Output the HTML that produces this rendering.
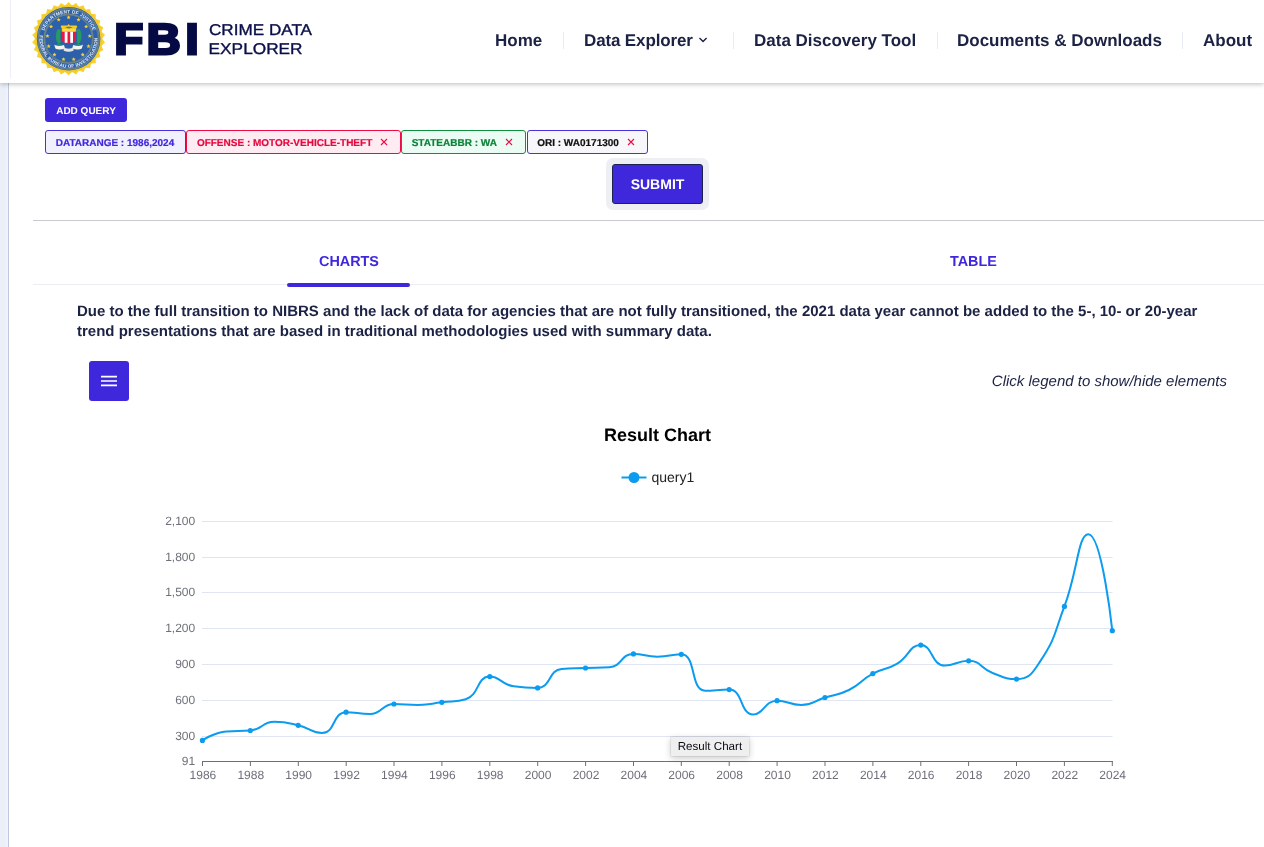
<!DOCTYPE html>
<html lang="en"><head><meta charset="utf-8"><title>FBI Crime Data Explorer</title>
<style>
*{box-sizing:border-box;margin:0;padding:0}
html,body{width:1264px;height:847px;overflow:hidden;background:#fff}
body{text-rendering:geometricPrecision;font-family:"Liberation Sans",Arial,Helvetica,sans-serif;color:#1c2244;position:relative}
.abs{position:absolute}
#strip{left:0;top:83px;width:8px;height:764px;background:linear-gradient(90deg,#ebeff8 0,#ebeff8 6.4px,#f1f4fa 6.6px)}
#stripline{left:8px;top:83px;width:1px;height:764px;background:#bfc7df}
#header{left:0;top:0;width:1264px;height:83px;background:#fff;box-shadow:0 1px 5px rgba(0,0,0,.28);z-index:5}
#hsep{left:10px;top:0;width:1px;height:78px;background:#eceef8}
.nav{position:absolute;top:30.6px;font-size:17px;font-weight:bold;color:#1c2244;line-height:20px;white-space:nowrap}
.nsep{position:absolute;top:32px;width:1px;height:17px;background:#e9ebf4}
.btn{position:absolute;background:#3f28dc;color:#fff;font-weight:bold;border-radius:3px;text-align:center;white-space:nowrap}
.chip{-webkit-text-stroke:.2px;position:absolute;top:130px;height:24px;border:1px solid;border-radius:3px;font-size:10px;font-weight:bold;line-height:22px;padding-left:9.7px;padding-top:1.7px;white-space:nowrap}
.chip .x{position:absolute;top:6.9px;stroke:#ee0a43;stroke-width:1.1;fill:none}
.tab{position:absolute;top:254.2px;font-size:14.4px;font-weight:bold;color:#3f28dc;line-height:16px}
svg text{text-rendering:geometricPrecision;font-family:"Liberation Sans",Arial,Helvetica,sans-serif}
#page{position:absolute;left:0;top:0;width:1264px;height:847px;overflow:hidden;will-change:transform}
</style></head><body><div id="page">
<div id="strip" class="abs"></div><div id="stripline" class="abs"></div>
<div id="header" class="abs">
 <div id="hsep" class="abs"></div>
 <svg class="abs" style="left:0;top:0" width="330" height="83" viewBox="0 0 330 83">
  <g>
<polygon points="68.60,2.10 72.10,5.38 76.21,2.90 78.95,6.84 83.49,5.26 85.35,9.69 90.11,9.09 91.02,13.80 95.80,14.21 95.70,19.01 100.30,20.40 99.20,25.07 103.41,27.39 101.37,31.73 105.00,34.87 102.10,38.70 105.00,42.53 101.37,45.67 103.41,50.01 99.20,52.33 100.30,57.00 95.70,58.39 95.80,63.19 91.02,63.60 90.11,68.31 85.35,67.71 83.49,72.14 78.95,70.56 76.21,74.50 72.10,72.02 68.60,75.30 65.10,72.02 60.99,74.50 58.25,70.56 53.71,72.14 51.85,67.71 47.09,68.31 46.18,63.60 41.40,63.19 41.50,58.39 36.90,57.00 38.00,52.33 33.79,50.01 35.83,45.67 32.20,42.53 35.10,38.70 32.20,34.87 35.83,31.73 33.79,27.39 38.00,25.07 36.90,20.40 41.50,19.01 41.40,14.21 46.18,13.80 47.09,9.09 51.85,9.69 53.71,5.26 58.25,6.84 60.99,2.90 65.10,5.38" fill="#f7d12f"/>
<circle cx="68.6" cy="38.7" r="33.7" fill="#f4cb2b"/>
<circle cx="68.6" cy="38.7" r="31.8" fill="#2d60aa"/>
<g fill="none" stroke="#d9c648">
<circle cx="68.6" cy="38.7" r="30.7" stroke-width=".4"/><circle cx="68.6" cy="38.7" r="29.6" stroke-width=".3"/>
<circle cx="68.6" cy="38.7" r="24.6" stroke-width=".4"/><circle cx="68.6" cy="38.7" r="23.7" stroke-width=".3"/>
</g>
<defs>
<path id="sealTop" d="M43.10 38.70 A25.5 25.5 0 0 1 94.10 38.70"/>
<path id="sealBot" d="M39.79 35.42 A29.0 29.0 0 1 0 97.41 35.42"/>
</defs>
<text font-size="4.7" font-weight="bold" fill="#e6ecf7" letter-spacing=".12"><textPath href="#sealTop" startOffset="50%" text-anchor="middle">DEPARTMENT OF JUSTICE</textPath></text>
<text font-size="4.7" font-weight="bold" fill="#e6ecf7" textLength="95" lengthAdjust="spacing"><textPath href="#sealBot" textLength="95" lengthAdjust="spacing">FEDERAL BUREAU OF INVESTIGATION</textPath></text>
<g fill="#f4d232"><polygon points="68.60,15.25 69.18,16.60 70.64,16.74 69.54,17.71 69.86,19.14 68.60,18.39 67.34,19.14 67.66,17.71 66.56,16.74 68.02,16.60"/><polygon points="78.50,17.69 79.08,19.04 80.54,19.18 79.44,20.15 79.76,21.58 78.50,20.83 77.23,21.58 77.56,20.15 76.45,19.18 77.92,19.04"/><polygon points="86.13,24.45 86.71,25.80 88.17,25.94 87.07,26.91 87.39,28.34 86.13,27.59 84.87,28.34 85.19,26.91 84.08,25.94 85.55,25.80"/><polygon points="89.74,33.98 90.33,35.33 91.79,35.47 90.69,36.44 91.01,37.87 89.74,37.12 88.48,37.87 88.80,36.44 87.70,35.47 89.16,35.33"/><polygon points="88.52,44.10 89.10,45.45 90.56,45.59 89.46,46.56 89.78,47.99 88.52,47.24 87.25,47.99 87.58,46.56 86.47,45.59 87.93,45.45"/><polygon points="82.72,52.49 83.31,53.84 84.77,53.98 83.67,54.95 83.99,56.38 82.72,55.63 81.46,56.38 81.78,54.95 80.68,53.98 82.14,53.84"/><polygon points="73.70,57.23 74.28,58.58 75.74,58.72 74.64,59.69 74.96,61.12 73.70,60.37 72.43,61.12 72.76,59.69 71.65,58.72 73.12,58.58"/><polygon points="63.50,57.23 64.08,58.58 65.55,58.72 64.44,59.69 64.77,61.12 63.50,60.37 62.24,61.12 62.56,59.69 61.46,58.72 62.92,58.58"/><polygon points="54.48,52.49 55.06,53.84 56.52,53.98 55.42,54.95 55.74,56.38 54.48,55.63 53.21,56.38 53.53,54.95 52.43,53.98 53.89,53.84"/><polygon points="48.68,44.10 49.27,45.45 50.73,45.59 49.62,46.56 49.95,47.99 48.68,47.24 47.42,47.99 47.74,46.56 46.64,45.59 48.10,45.45"/><polygon points="47.46,33.98 48.04,35.33 49.50,35.47 48.40,36.44 48.72,37.87 47.46,37.12 46.19,37.87 46.51,36.44 45.41,35.47 46.87,35.33"/><polygon points="51.07,24.45 51.65,25.80 53.12,25.94 52.01,26.91 52.33,28.34 51.07,27.59 49.81,28.34 50.13,26.91 49.03,25.94 50.49,25.80"/><polygon points="58.70,17.69 59.28,19.04 60.75,19.18 59.64,20.15 59.97,21.58 58.70,20.83 57.44,21.58 57.76,20.15 56.66,19.18 58.12,19.04"/></g>
<path d="M57.6 29.2 C55.4 33 55.4 39.5 57.4 42.6 C59 44.6 62 44.8 64 45.4 L63.6 46.2 C61 45.8 58.6 45.6 57 44.4 L60.6 42.8 C60 38.6 60.4 33 60.6 29.6 Z" fill="#259a62"/>
<path d="M79.8 29.2 C82 33 82 39.5 80 42.6 C78.4 44.6 75.4 44.8 73.4 45.4 L73.8 46.2 C76.4 45.8 78.8 45.6 80.4 44.4 L76.8 42.8 C77.4 38.6 77 33 76.8 29.6 Z" fill="#259a62"/>
<path d="M60.6 26.9 L61.4 25.5 L67.4 25.4 L68.6 23.9 L69.8 25.4 L76.6 25.5 L77.4 26.9 L76.2 28 L76.2 32 L61.8 32 L61.8 28 Z" fill="#f5cc24"/>
<path d="M64.8 27.6 L68.8 26.5 L72.8 27.6 L68.8 28.4 Z" fill="#5a74a4"/>
<path d="M61.9 31.6 H76 V40.5 C76 42.4 71.2 42.6 68.95 43.8 C66.6 42.6 61.9 42.4 61.9 40.5 Z" fill="#e31b44"/>
<rect x="64.7" y="31.6" width="2.8" height="11.2" fill="#fff"/><rect x="70.2" y="31.6" width="2.8" height="11.2" fill="#fff"/>
<rect x="62.6" y="29.2" width="12.6" height="2.4" fill="#f8dc55"/>
<path d="M54.2 44.6 C57 46.6 61 46.2 64 45 L65 48.6 C61 50.2 57.4 49.6 55.4 48.4 Z" fill="#f4f4f0"/>
<path d="M83 44.6 C80.2 46.6 76.2 46.2 73.2 45 L72.2 48.6 C76.2 50.2 79.8 49.6 81.8 48.4 Z" fill="#f4f4f0"/>
<path d="M63.4 47.6 C66.6 49 70.6 49 73.8 47.6 L73.4 50.8 C70.4 52 66.8 52 63.8 50.8 Z" fill="#e6e6e0"/>
</g>
  <g transform="scale(1.08,1)"><text x="105.98 135.8 171.77" y="54.15" font-size="43.4" font-weight="bold" fill="#050a45" stroke="#050a45" stroke-width="2.9" stroke-linejoin="miter">FBI</text></g>
  <text x="209" y="34.7" font-size="15.6" fill="#0a0f48" stroke="#0a0f48" stroke-width=".35" textLength="103" lengthAdjust="spacingAndGlyphs">CRIME DATA</text>
  <text x="208.6" y="53.5" font-size="15.6" fill="#0a0f48" stroke="#0a0f48" stroke-width=".35" textLength="94" lengthAdjust="spacingAndGlyphs">EXPLORER</text>
 </svg>
 <div class="nav" style="left:495px">Home</div>
 <div class="nsep" style="left:563px"></div>
 <div class="nav" style="left:584px;letter-spacing:-.14px">Data Explorer</div>
 <svg class="abs" style="left:698px;top:35px" width="10" height="9" viewBox="0 0 10 9"><path d="M1.5 2.9 L5.05 6.4 L8.6 2.9" fill="none" stroke="#1c2244" stroke-width="1.4"/></svg>
 <div class="nsep" style="left:733px"></div>
 <div class="nav" style="left:754px">Data Discovery Tool</div>
 <div class="nsep" style="left:937px"></div>
 <div class="nav" style="left:957px">Documents &amp; Downloads</div>
 <div class="nsep" style="left:1182px"></div>
 <div class="nav" style="left:1203px">About</div>
</div>

<div class="btn" style="left:45px;top:98px;width:82px;height:24px;font-size:10px;line-height:24px;padding-top:2px">ADD QUERY</div>

<div class="chip" style="left:45px;width:140.6px;border-color:#4632e0;background:#f1f0ff;color:#3f28dc">DATARANGE : 1986,2024</div>
<div class="chip" style="left:186.2px;width:214.6px;border-color:#ee0a43;background:#ffecf2;color:#e40a41">OFFENSE : MOTOR-VEHICLE-THEFT<svg class="x" style="left:192.8px" width="8" height="8" viewBox="0 0 8 8"><path d="M1 1 7 7M7 1 1 7"/></svg></div>
<div class="chip" style="left:401px;width:124.9px;border-color:#0f9140;background:#eafcf4;color:#0b8238">STATEABBR : WA<svg class="x" style="left:103.4px" width="8" height="8" viewBox="0 0 8 8"><path d="M1 1 7 7M7 1 1 7"/></svg></div>
<div class="chip" style="left:526.5px;width:121.2px;border-color:#4632e0;background:#f7f7fb;color:#111">ORI : WA0171300<svg class="x" style="left:99.3px" width="8" height="8" viewBox="0 0 8 8"><path d="M1 1 7 7M7 1 1 7"/></svg></div>

<div class="abs" style="left:606px;top:158px;width:103px;height:52px;border-radius:7px;background:#eeeff3"></div>
<div class="btn" style="left:612px;top:164px;width:91px;height:40px;font-size:14px;line-height:38px;padding-top:.4px;border:1px solid #1b2350;border-radius:3px">SUBMIT</div>

<div class="abs" style="left:33px;top:220px;width:1231px;height:1px;background:#c9c9d4"></div>

<div class="tab" style="left:319px">CHARTS</div>
<div class="tab" style="left:950px">TABLE</div>
<div class="abs" style="left:33px;top:284px;width:1231px;height:1px;background:#ecedf3"></div>
<div class="abs" style="left:287px;top:283px;width:123px;height:4px;background:#3f28dc;border-radius:2px"></div>

<div class="abs" style="left:77px;top:302px;width:1180px;font-size:15px;font-weight:bold;line-height:19.8px;color:#1c2244;letter-spacing:.006px">Due to the full transition to NIBRS and the lack of data for agencies that are not fully transitioned, the 2021 data year cannot be added to the 5-, 10- or 20-year<br>trend presentations that are based in traditional methodologies used with summary data.</div>

<div class="btn" style="left:89px;top:361px;width:40px;height:40px">
 <svg class="abs" style="left:12px;top:14px" width="16" height="12" viewBox="0 0 16 12"><path d="M0 1.6h16M0 6h16M0 10.4h16" stroke="#fff" stroke-width="1.6" fill="none"/></svg>
</div>
<div class="abs" style="left:900px;top:373px;width:327px;text-align:right;font-size:15px;font-style:italic;color:#1c2244;line-height:18px;white-space:nowrap">Click legend to show/hide elements</div>

<svg class="abs" style="left:0;top:410px" width="1264" height="437" viewBox="0 410 1264 437">
 <text x="657.5" y="441" font-size="18" font-weight="bold" fill="#000" text-anchor="middle">Result Chart</text>
 <g stroke="#0b9cef" fill="#0b9cef"><line x1="621.5" x2="646.5" y1="477.5" y2="477.5" stroke-width="2"/><circle cx="634" cy="477.5" r="5.5" stroke="none"/></g>
 <text x="651.5" y="482.3" font-size="14" fill="#222">query1</text>
 <g stroke="#e0e6f1" stroke-width="1" shape-rendering="auto"><line x1="202" x2="1112.6" y1="521.5" y2="521.5"/><line x1="202" x2="1112.6" y1="557.5" y2="557.5"/><line x1="202" x2="1112.6" y1="592.5" y2="592.5"/><line x1="202" x2="1112.6" y1="628.5" y2="628.5"/><line x1="202" x2="1112.6" y1="664.5" y2="664.5"/><line x1="202" x2="1112.6" y1="700.5" y2="700.5"/><line x1="202" x2="1112.6" y1="736.5" y2="736.5"/></g>
 <g stroke="#6e7079" stroke-width="1"><line x1="202" x2="1113" y1="761.5" y2="761.5"/><line x1="202.5" x2="202.5" y1="761.5" y2="766"/><line x1="250.4" x2="250.4" y1="761.5" y2="766"/><line x1="298.3" x2="298.3" y1="761.5" y2="766"/><line x1="346.2" x2="346.2" y1="761.5" y2="766"/><line x1="394.0" x2="394.0" y1="761.5" y2="766"/><line x1="441.9" x2="441.9" y1="761.5" y2="766"/><line x1="489.8" x2="489.8" y1="761.5" y2="766"/><line x1="537.7" x2="537.7" y1="761.5" y2="766"/><line x1="585.6" x2="585.6" y1="761.5" y2="766"/><line x1="633.5" x2="633.5" y1="761.5" y2="766"/><line x1="681.3" x2="681.3" y1="761.5" y2="766"/><line x1="729.2" x2="729.2" y1="761.5" y2="766"/><line x1="777.1" x2="777.1" y1="761.5" y2="766"/><line x1="825.0" x2="825.0" y1="761.5" y2="766"/><line x1="872.9" x2="872.9" y1="761.5" y2="766"/><line x1="920.8" x2="920.8" y1="761.5" y2="766"/><line x1="968.6" x2="968.6" y1="761.5" y2="766"/><line x1="1016.5" x2="1016.5" y1="761.5" y2="766"/><line x1="1064.4" x2="1064.4" y1="761.5" y2="766"/><line x1="1112.3" x2="1112.3" y1="761.5" y2="766"/></g>
 <g font-size="12" fill="#6e7079" text-anchor="end"><text x="195.2" y="525.1">2,100</text><text x="195.2" y="561.1">1,800</text><text x="195.2" y="596.1">1,500</text><text x="195.2" y="632.1">1,200</text><text x="195.2" y="668.1">900</text><text x="195.2" y="704.1">600</text><text x="195.2" y="740.1">300</text><text x="195.2" y="764.8">91</text></g>
 <g font-size="12" fill="#6e7079" text-anchor="middle"><text x="202.9" y="778.8">1986</text><text x="250.8" y="778.8">1988</text><text x="298.7" y="778.8">1990</text><text x="346.6" y="778.8">1992</text><text x="394.4" y="778.8">1994</text><text x="442.3" y="778.8">1996</text><text x="490.2" y="778.8">1998</text><text x="538.1" y="778.8">2000</text><text x="586.0" y="778.8">2002</text><text x="633.9" y="778.8">2004</text><text x="681.7" y="778.8">2006</text><text x="729.6" y="778.8">2008</text><text x="777.5" y="778.8">2010</text><text x="825.4" y="778.8">2012</text><text x="873.3" y="778.8">2014</text><text x="921.2" y="778.8">2016</text><text x="969.0" y="778.8">2018</text><text x="1016.9" y="778.8">2020</text><text x="1064.8" y="778.8">2022</text><text x="1112.7" y="778.8">2024</text></g>
 <path d="M202.40 740.40C202.40 740.40 213.98 732.36 226.34 731.40C237.93 730.50 238.68 731.40 250.29 730.50C262.63 729.54 261.95 721.80 274.23 721.80C285.90 721.80 286.45 722.53 298.18 725.30C310.39 728.18 311.54 733.10 322.12 733.10C335.48 733.10 332.43 712.20 346.07 712.20C356.37 712.20 358.50 714.00 370.01 714.00C382.45 714.00 381.51 704.00 393.96 704.00C405.45 704.00 405.96 704.90 417.90 704.90C429.91 704.90 429.89 703.72 441.85 702.30C453.83 700.87 455.66 702.30 465.79 699.20C479.61 694.97 476.32 676.60 489.74 676.60C500.26 676.60 501.27 684.58 513.68 686.30C525.21 687.90 527.10 687.90 537.63 687.90C551.04 687.90 548.15 670.05 561.57 668.90C572.09 668.00 573.54 668.40 585.52 668.00C597.49 667.60 598.30 668.00 609.46 667.30C622.24 666.50 620.66 653.90 633.41 653.90C644.60 653.90 645.37 656.70 657.35 656.70C669.31 656.70 672.78 654.30 681.29 654.30C696.72 654.30 689.79 690.70 705.24 690.70C713.74 690.70 719.38 689.60 729.18 689.60C743.32 689.60 739.83 714.50 753.13 714.50C763.77 714.50 764.34 700.70 777.07 700.70C788.28 700.70 789.23 705.00 801.02 705.00C813.18 705.00 812.99 701.25 824.96 697.50C836.94 693.75 837.81 695.54 848.91 690.00C861.75 683.59 860.18 680.50 872.85 673.60C884.13 667.45 885.81 670.44 896.80 663.90C909.75 656.19 908.98 645.10 920.74 645.10C932.92 645.10 931.19 665.60 944.69 665.60C955.14 665.60 957.23 660.80 968.63 660.80C981.18 660.80 980.10 668.23 992.58 673.00C1004.05 677.38 1005.72 679.10 1016.52 679.10C1029.67 679.10 1032.43 673.10 1040.47 660.90C1056.37 636.75 1053.90 634.21 1064.41 606.40C1077.84 570.86 1077.98 534.20 1088.36 534.20C1101.92 534.20 1112.30 630.70 1112.30 630.70" fill="none" stroke="#0b9cef" stroke-width="2" stroke-linejoin="bevel"/>
 <g fill="#0b9cef"><circle cx="202.40" cy="740.40" r="2.6"/><circle cx="250.29" cy="730.50" r="2.6"/><circle cx="298.18" cy="725.30" r="2.6"/><circle cx="346.07" cy="712.20" r="2.6"/><circle cx="393.96" cy="704.00" r="2.6"/><circle cx="441.85" cy="702.30" r="2.6"/><circle cx="489.74" cy="676.60" r="2.6"/><circle cx="537.63" cy="687.90" r="2.6"/><circle cx="585.52" cy="668.00" r="2.6"/><circle cx="633.41" cy="653.90" r="2.6"/><circle cx="681.29" cy="654.30" r="2.6"/><circle cx="729.18" cy="689.60" r="2.6"/><circle cx="777.07" cy="700.70" r="2.6"/><circle cx="824.96" cy="697.50" r="2.6"/><circle cx="872.85" cy="673.60" r="2.6"/><circle cx="920.74" cy="645.10" r="2.6"/><circle cx="968.63" cy="660.80" r="2.6"/><circle cx="1016.52" cy="679.10" r="2.6"/><circle cx="1064.41" cy="606.40" r="2.6"/><circle cx="1112.30" cy="630.70" r="2.6"/></g>
</svg>

<div class="abs" style="left:670.8px;top:736.6px;width:78.2px;height:19px;background:#efefef;box-shadow:0 0 0 .5px rgba(0,0,0,.12),0 2px 7px rgba(0,0,0,.22);font-size:11.6px;line-height:19px;color:#0a0a14;text-align:center;white-space:nowrap">Result Chart</div>
</div></body></html>
